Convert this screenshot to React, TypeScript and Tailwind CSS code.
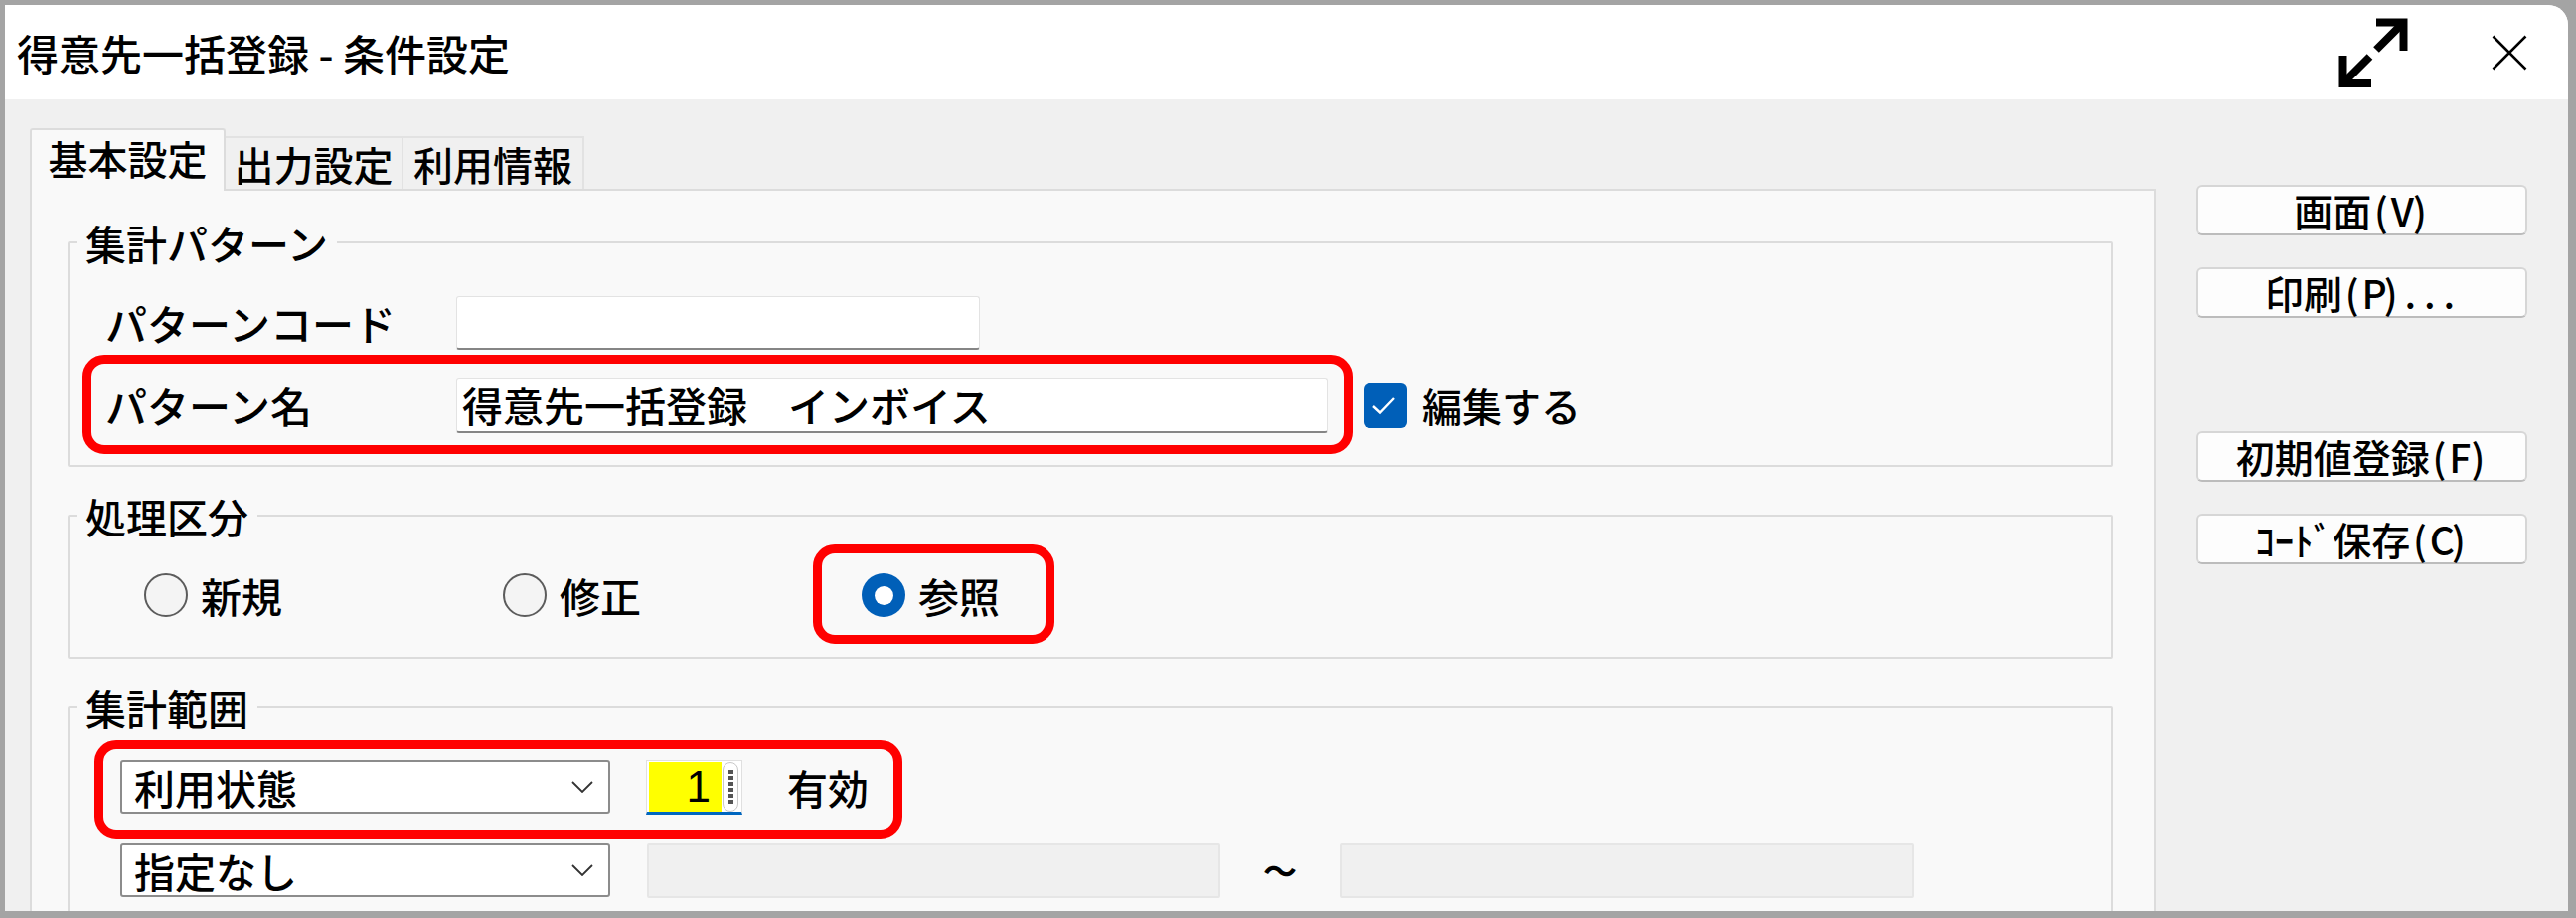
import React from 'react';

const font = "font-['Noto_Sans_CJK_JP','Noto_Sans',sans-serif]";

// button labels mimic the half-width ASCII look of the original dialog font
const BtnLabel: React.FC<{ text: string }> = ({ text }) => (
  <span className="flex items-center justify-center">
    {text.split('').map((ch, i) =>
      /[\x20-\x7e]/.test(ch) ? (
        <span key={i} className="inline-block w-[19.5px] text-center">{ch}</span>
      ) : (
        <span key={i}>{ch}</span>
      )
    )}
  </span>
);

const SideButton: React.FC<{ label: string; className?: string }> = ({ label, className = '' }) => (
  <div
    className={`h-[51px] w-[333px] rounded-[6px] border-2 border-[#d6d6d6] border-b-[#bcbcbc] bg-[#fdfdfd] text-[39px] leading-none text-black ${className}`}
  >
    <div className="flex h-full items-center justify-center">
      <BtnLabel text={label} />
    </div>
  </div>
);

const Chevron = () => (
  <svg width="22" height="12" viewBox="0 0 22 12" fill="none">
    <path d="M1 1 L11 11 L21 1" stroke="#333" strokeWidth="1.8" />
  </svg>
);

const Combo: React.FC<{ value: string }> = ({ value }) => (
  <div className="flex h-[54px] w-[493px] items-center rounded-[3px] border-2 border-[#8c8c8c] bg-white pl-[12px] pr-[15px]">
    <span className="flex-1 text-[41px] leading-none">{value}</span>
    <Chevron />
  </div>
);

const Radio: React.FC<{ label: string; checked?: boolean }> = ({ label, checked }) => (
  <div className="flex w-[361px] items-center">
    {checked ? (
      <div className="flex h-[44px] w-[44px] items-center justify-center rounded-full bg-[#005fb8]">
        <div className="h-[19px] w-[19px] rounded-full bg-white" />
      </div>
    ) : (
      <div className="h-[44px] w-[44px] rounded-full border-2 border-[#5c5c5c] bg-[#f4f4f4]" />
    )}
    <span className="ml-[13px] text-[41px] leading-none">{label}</span>
  </div>
);

const Group: React.FC<{ title: string; className?: string; children: React.ReactNode }> = ({
  title,
  className = '',
  children,
}) => (
  <fieldset className={`rounded-[2px] border-2 border-[#dcdcdc] ${className}`}>
    <legend className="ml-[7px] px-[9px] text-[41px] leading-[48px]">{title}</legend>
    {children}
  </fieldset>
);

const App: React.FC = () => {
  return (
    <div className={`relative h-[924px] w-[2592px] overflow-hidden bg-[#a4a4a4] pb-[7px] pl-[5px] pr-[8px] pt-[5px] font-medium text-black ${font}`}>
      <div className="flex h-full w-full flex-col overflow-hidden rounded-tr-[20px] bg-[#f0f0f0]">
        {/* Title bar */}
        <div className="flex h-[95px] shrink-0 items-center bg-white pl-[12px] pr-[41px]">
          <span className="text-[42px] leading-none">得意先一括登録 - 条件設定</span>
          <div className="flex-1" />
          <svg width="75" height="75" viewBox="0 0 75 75" fill="none">
            <path d="M45 7.5 H68.5 V32" stroke="#000" strokeWidth="8" strokeLinecap="square" />
            <path d="M67 9 L41 35" stroke="#000" strokeWidth="8" />
            <path d="M7.5 45 V69 H32" stroke="#000" strokeWidth="8" strokeLinecap="square" />
            <path d="M9 67.5 L34.5 42" stroke="#000" strokeWidth="8" />
          </svg>
          <svg width="36" height="36" viewBox="0 0 36 36" className="ml-[82px]">
            <path d="M1.5 1.5 L34.5 34.5 M34.5 1.5 L1.5 34.5" stroke="#000" strokeWidth="2.6" />
          </svg>
        </div>

        {/* Body */}
        <div className="flex min-h-0 flex-1 pl-[25px] pt-[29px]">
          <div className="flex w-[2139px] shrink-0 flex-col">
            {/* Tabs */}
            <div className="flex h-[61px] items-end text-[40px] leading-none">
              <div className="relative z-10 -mb-[2px] flex h-[63px] w-[197px] items-center justify-center rounded-t-[3px] border-2 border-b-0 border-[#dcdcdc] bg-[#f9f9f9] pb-[6px]">
                基本設定
              </div>
              <div className="flex h-[53px] w-[179px] items-center justify-center border-2 border-b-0 border-l-0 border-[#e2e2e2] bg-[#f0f0f0]">
                出力設定
              </div>
              <div className="flex h-[53px] w-[182px] items-center justify-center border-2 border-b-0 border-l-0 border-[#e2e2e2] bg-[#f0f0f0]">
                利用情報
              </div>
            </div>

            {/* Tab panel */}
            <div className="min-h-0 flex-1 overflow-hidden border-2 border-b-0 border-[#dcdcdc] bg-[#f9f9f9] pl-[36px] pr-[41px] pt-[28px]">
              <Group title="集計パターン" className="pb-[32px] pt-[30px]">
                <div className="flex h-[54px] items-center pl-[36px]">
                  <span className="w-[353px] text-[42px] leading-none">パターンコード</span>
                  <div className="h-[54px] w-[527px] rounded-[3px] border border-[#e3e3e3] border-b-2 border-b-[#858585] bg-white" />
                </div>
                <div className="mt-[28px] flex h-[56px] items-center pl-[36px]">
                  <span className="w-[353px] text-[42px] leading-none">パターン名</span>
                  <div className="flex h-[56px] w-[877px] items-center rounded-[3px] border border-[#e3e3e3] border-b-2 border-b-[#858585] bg-white pl-[5px] text-[41px] leading-none">
                    得意先一括登録　インボイス
                  </div>
                  <div className="ml-[36px] flex h-[45px] w-[44px] items-center justify-center rounded-[6px] bg-[#005fb8]">
                    <svg width="44" height="45" viewBox="0 0 44 45" fill="none">
                      <path d="M10 23 L17 29.5 L31 15" stroke="#fff" strokeWidth="2.4" />
                    </svg>
                  </div>
                  <span className="ml-[15px] text-[40px] leading-none">編集する</span>
                </div>
              </Group>

              <Group title="処理区分" className="mt-[25px] pb-[40px] pt-[34px]">
                <div className="flex h-[44px] items-center pl-[75px]">
                  <Radio label="新規" />
                  <Radio label="修正" />
                  <Radio label="参照" checked />
                </div>
              </Group>

              <Group title="集計範囲" className="mt-[25px] h-[400px] pt-[29px]">
                <div className="flex h-[54px] items-center pl-[51px]">
                  <Combo value="利用状態" />
                  <div className="ml-[36px] flex h-[55px] w-[97px] items-stretch border border-[#e0e0e0] border-b-[3px] border-b-[#0067c0] bg-white pl-[2px] pt-[1px]">
                    <div className="flex w-[73px] items-center justify-end bg-[#ffff00] pr-[11px] font-['Liberation_Sans',sans-serif] text-[44px] font-normal leading-none">1</div>
                    <div className="ml-[1px] flex w-[16px] flex-col items-center justify-center gap-[2px] rounded-full border border-[#c8c8c8]">
                      {[0, 1, 2, 3, 4, 5].map((i) => (
                        <div key={i} className="h-[4px] w-[5px] bg-[#555]" />
                      ))}
                    </div>
                  </div>
                  <span className="ml-[45px] text-[41px] leading-none">有効</span>
                </div>
                <div className="mt-[30px] flex h-[54px] items-center pl-[51px]">
                  <Combo value="指定なし" />
                  <div className="ml-[37px] h-[55px] w-[577px] rounded-[2px] border-2 border-[#e6e6e6] bg-[#f0f0f0]" />
                  <span className="w-[120px] text-center text-[34px] font-bold leading-none">～</span>
                  <div className="h-[55px] w-[578px] rounded-[2px] border-2 border-[#e6e6e6] bg-[#f0f0f0]" />
                </div>
              </Group>
            </div>
          </div>

          {/* Side buttons */}
          <div className="ml-[41px] flex flex-col pt-[57px]">
            <SideButton label="画面(V)" />
            <SideButton label="印刷(P)..." className="mt-[32px]" />
            <SideButton label="初期値登録(F)" className="mt-[114px]" />
            <SideButton label="ｺｰﾄﾞ保存(C)" className="mt-[32px]" />
          </div>
        </div>
      </div>

      {/* red annotation frames */}
      <div className="absolute left-[83px] top-[357px] h-[100px] w-[1278px] rounded-[22px] border-[9px] border-[#ff0000]" />
      <div className="absolute left-[818px] top-[548px] h-[100px] w-[243px] rounded-[22px] border-[9px] border-[#ff0000]" />
      <div className="absolute left-[95px] top-[745px] h-[99px] w-[813px] rounded-[22px] border-[9px] border-[#ff0000]" />
    </div>
  );
};

export default App;
